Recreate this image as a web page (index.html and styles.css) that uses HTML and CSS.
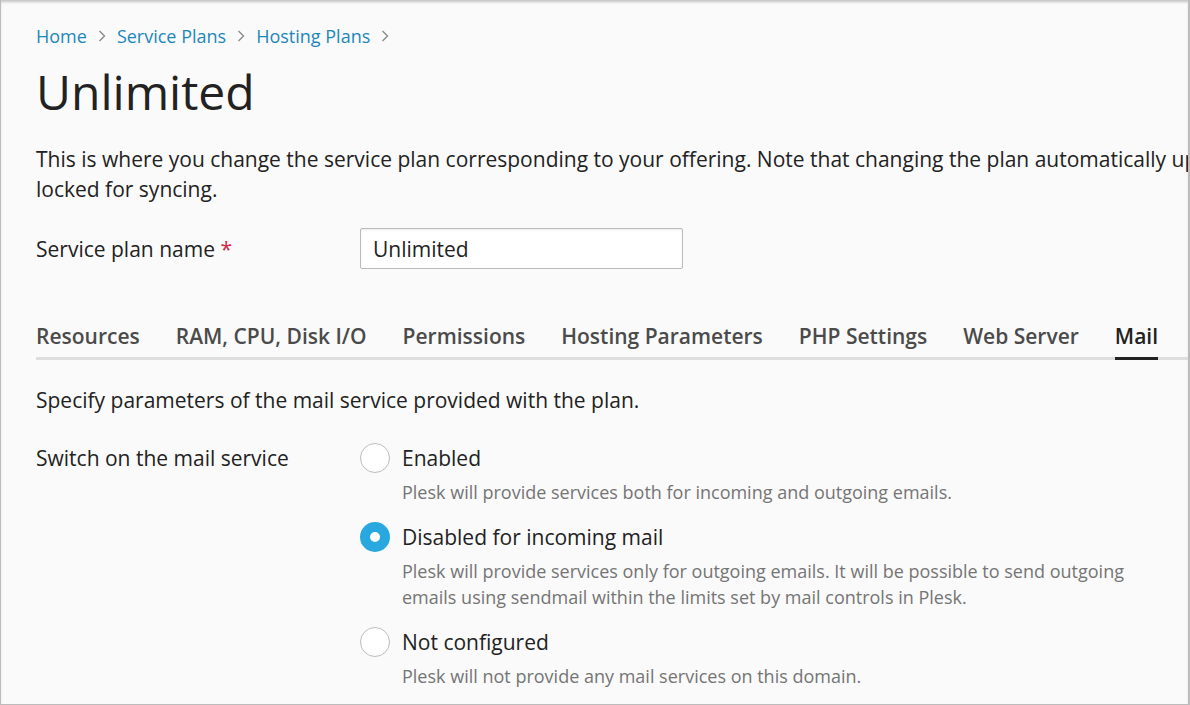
FILE: index.html
```html
<!DOCTYPE html>
<html>
<head>
<meta charset="utf-8">
<link rel="stylesheet" href="styles.css">
</head>
<body>
<div class="frame">
  <div class="page">
    <nav class="crumbs">
      <a class="crumb">Home</a>
      <svg class="chev" width="8" height="12" viewBox="0 0 8 12"><path d="M1.5 1 L6.5 6 L1.5 11" fill="none" stroke="#8a8a8a" stroke-width="1.4"/></svg>
      <a class="crumb">Service Plans</a>
      <svg class="chev" width="8" height="12" viewBox="0 0 8 12"><path d="M1.5 1 L6.5 6 L1.5 11" fill="none" stroke="#8a8a8a" stroke-width="1.4"/></svg>
      <a class="crumb">Hosting Plans</a>
      <svg class="chev" width="8" height="12" viewBox="0 0 8 12"><path d="M1.5 1 L6.5 6 L1.5 11" fill="none" stroke="#8a8a8a" stroke-width="1.4"/></svg>
    </nav>
    <h1 class="title">Unlimited</h1>
    <p class="intro"><span class="nowrap">This is where you change the service plan corresponding to your offering. Note that changing the plan automatically updates all subscriptions based on it, except those</span><br>locked for syncing.</p>
    <div class="field">
      <label class="field-label">Service plan name <span class="req">*</span></label>
      <div class="input">Unlimited</div>
    </div>
    <div class="tabs">
      <span class="tab">Resources</span>
      <span class="tab">RAM, CPU, Disk I/O</span>
      <span class="tab">Permissions</span>
      <span class="tab">Hosting Parameters</span>
      <span class="tab">PHP Settings</span>
      <span class="tab">Web Server</span>
      <span class="tab active">Mail</span>
    </div>
    <p class="hint">Specify parameters of the mail service provided with the plan.</p>
    <div class="field options-field">
      <div class="field-label">Switch on the mail service</div>
      <div class="options">
        <div class="option">
          <div class="radio-line"><span class="radio"></span><span class="opt-label">Enabled</span></div>
          <div class="opt-desc">Plesk will provide services both for incoming and outgoing emails.</div>
        </div>
        <div class="option">
          <div class="radio-line"><span class="radio checked"></span><span class="opt-label">Disabled for incoming mail</span></div>
          <div class="opt-desc">Plesk will provide services only for outgoing emails. It will be possible to send outgoing<br>emails using sendmail within the limits set by mail controls in Plesk.</div>
        </div>
        <div class="option">
          <div class="radio-line"><span class="radio"></span><span class="opt-label">Not configured</span></div>
          <div class="opt-desc">Plesk will not provide any mail services on this domain.</div>
        </div>
      </div>
    </div>
  </div>
</div>
</body>
</html>
```

FILE: styles.css
```css
html, body {
  margin: 0;
  padding: 0;
  background: #fafafa;
}
.frame {
  width: 1190px;
  height: 705px;
  box-sizing: border-box;
  border-left: 1px solid #bcbcbc;
  border-right: 2px solid #bcbcbc;
  border-bottom: 1px solid #bcbcbc;
  box-shadow: inset 0 3px 3px -1px rgba(0,0,0,0.22);
  overflow: hidden;
  background: #fafafa;
  font-family: "Open Sans", "Noto Sans", sans-serif;
  color: #222;
}
.page {
  padding: 24px 0 0 35px;
}
.crumbs {
  display: flex;
  align-items: center;
  gap: 11px;
  font-size: 18px;
  line-height: 24px;
  height: 24px;
}
.crumb {
  color: #1d87bb;
  text-decoration: none;
}
.chev {
  display: block;
}
.title {
  margin: 16px 0 0;
  font-size: 48px;
  font-weight: 400;
  line-height: 56px;
  color: #222;
}
.intro {
  margin: 24px 0 0;
  font-size: 21px;
  line-height: 30px;
  color: #222;
  width: 1600px;
}
.nowrap {
  white-space: nowrap;
}
.field {
  display: flex;
  margin-top: 24px;
}
.field-label {
  width: 324px;
  flex: none;
  font-size: 21px;
  line-height: 40px;
  padding-top: 1px;
}
.req {
  color: #d0264a;
}
.input {
  width: 323px;
  height: 41px;
  box-sizing: border-box;
  border: 1px solid #bbb;
  border-radius: 2px;
  background: #fff;
  box-shadow: inset 0 1px 2px rgba(0,0,0,0.08);
  font-size: 21px;
  line-height: 40px;
  padding-left: 12px;
}
.tabs {
  display: flex;
  gap: 36px;
  margin-top: 52px;
  border-bottom: 3px solid #dedede;
  font-size: 21px;
  font-weight: 600;
  color: #4b4b4b;
  width: 1200px;
}
.tab {
  line-height: 30px;
  padding-bottom: 6px;
  margin-bottom: -3px;
  border-bottom: 3px solid transparent;
}
.tab.active {
  color: #222;
  border-bottom-color: #222;
}
.hint {
  margin: 25px 0 0;
  font-size: 21px;
  line-height: 30px;
}
.options-field {
  margin-top: 28px;
}
.options-field .field-label {
  line-height: 30px;
  padding-top: 0;
}
.options {
  display: flex;
  flex-direction: column;
  gap: 17px;
}
.radio-line {
  display: flex;
  align-items: center;
  gap: 12px;
  height: 30px;
}
.radio {
  width: 30px;
  height: 30px;
  box-sizing: border-box;
  border: 1px solid #bdbdbd;
  border-radius: 50%;
  background: #fff;
  flex: none;
}
.radio.checked {
  border: 10px solid #28a8df;
  background: #fff;
}
.opt-label {
  font-size: 21px;
  line-height: 30px;
  color: #222;
}
.opt-desc {
  margin-left: 42px;
  margin-top: 6px;
  font-size: 18px;
  line-height: 26px;
  color: #757575;
}
```
